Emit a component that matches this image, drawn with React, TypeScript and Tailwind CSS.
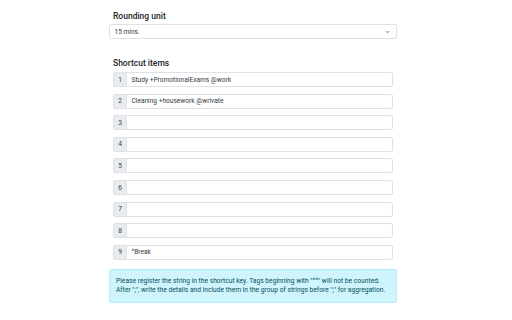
import React from 'react';

const items = [
	'Study +PromotionalExams @work',
	'Cleaning +housework @wrivate',
	'',
	'',
	'',
	'',
	'',
	'',
	'^Break',
];

function ShortcutRow({ index, value }: { index: number; value: string }) {
	return (
		<div className="flex h-[15px] w-full">
			<span className="flex w-[14px] items-center justify-center rounded-l-[2px] border border-[#dee2e6] bg-[#e9ecef] pt-px text-[6.6px] leading-none text-[#343a40]">
				{index}
			</span>
			<div className="-ml-px flex flex-1 items-center rounded-r-[2px] border border-[#dee2e6] bg-white pl-[4.5px] pt-px text-[6.6px] leading-none text-[#343a40]">
				{value}
			</div>
		</div>
	);
}

export default function App() {
	return (
		<div className="h-[320px] w-[512px] overflow-hidden bg-white font-['Roboto',sans-serif] text-[#212529]">
			<div className="ml-[109px] w-[288px] pt-[10px]">
				<h5 className="px-[4px] text-[8.5px] font-medium leading-[12px]">
					Rounding unit
				</h5>
				<div className="mt-[2px] flex h-[15px] items-center justify-between rounded-[2px] border border-[#dee2e6] pl-[4.5px] pr-[6px] pt-px text-[6.6px] leading-none text-[#343a40]">
					<span>15 mins.</span>
					<svg
						width="5"
						height="4"
						viewBox="0 0 16 16"
						fill="none"
						stroke="#343a40"
						strokeWidth="2.5"
						strokeLinecap="round"
						strokeLinejoin="round"
					>
						<path d="M2 5l6 6 6-6" />
					</svg>
				</div>

				<h5 className="mt-[18px] px-[4px] text-[8.5px] font-medium leading-[12px]">
					Shortcut items
				</h5>
				<div className="mt-[3px] flex flex-col gap-[6.6px] px-[4px]">
					{items.map((value, i) => (
						<ShortcutRow key={i} index={i + 1} value={value} />
					))}
				</div>

				<div className="mt-[9.5px] rounded-[2px] border border-[#b6effb] bg-[#cff4fc] px-[6px] py-[6.5px] text-[6.7px] leading-[9.5px] text-[#055160]">
					<p>
						Please register the string in the shortcut key. Tags
						beginning with "^^" will not be counted.
					</p>
					<p>
						After ";", write the details and include them in the
						group of strings before ";" for aggregation.
					</p>
				</div>
			</div>
		</div>
	);
}
